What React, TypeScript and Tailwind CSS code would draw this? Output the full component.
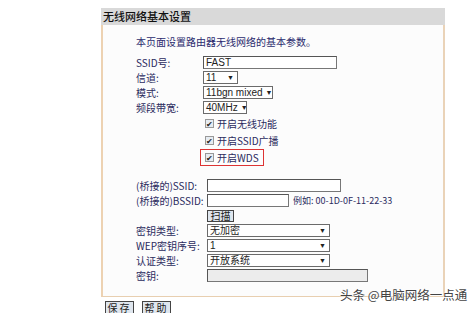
import React from "react";

const font = { fontFamily: '"Noto Sans CJK SC", "Liberation Sans", sans-serif' };

function Sel({ w, text }: { w: number; text: string }) {
  return (
    <div
      className="h-[13px] border border-[#6b6b6b] bg-white flex items-center justify-between pl-[2px] pr-[3px] text-[10px] text-[#222] leading-none whitespace-nowrap overflow-hidden"
      style={{ width: w, fontFamily: '"Liberation Sans", "Noto Sans CJK SC", sans-serif' }}
    >
      <span>{text}</span>
      <span className="text-[7px] ml-[3px]">▼</span>
    </div>
  );
}

function Inp({ w, text, gray }: { w: number; text?: string; gray?: boolean }) {
  return (
    <div
      className={`h-[13px] border border-[#777] border-t-[#555] border-l-[#555] flex items-center pl-[2px] text-[10px] text-[#222] leading-none ${gray ? "bg-[#ececec]" : "bg-white"}`}
      style={{ width: w, fontFamily: '"Liberation Sans", "Noto Sans CJK SC", sans-serif' }}
    >
      {text}
    </div>
  );
}

function Row({ label, h = 15, ml = 67, children }: { label: string; h?: number; ml?: number; children?: React.ReactNode }) {
  return (
    <div className="flex items-center" style={{ height: h }}>
      <div className="text-[10px] text-[#2b2b5e] leading-none whitespace-nowrap" style={{ width: ml }}>
        {label}
      </div>
      {children}
    </div>
  );
}

function Check({ text, boxed }: { text: string; boxed?: boolean }) {
  return (
    <div className="flex items-center h-[17px]">
      <div
        className={`flex items-center gap-[3px] h-[17px] pl-[4px] pr-[4px] -ml-[5px] ${boxed ? "border border-[#d33] bg-[#fdfdfd]" : "border border-transparent"}`}
      >
        <div className="w-[9px] h-[9px] border border-[#999] bg-[#e6ecf2] flex items-center justify-center text-[8px] leading-none text-[#222]">
          ✔
        </div>
        <span className="text-[10px] text-[#2b2b5e] leading-none">{text}</span>
      </div>
    </div>
  );
}

export default function App() {
  return (
    <div className="relative w-[471px] h-[313px] bg-white overflow-hidden" style={font}>
      <div className="pt-[8px] pl-[101px] w-[445px]">
        <div className="h-[17px] bg-[#d9d9d9] flex items-center pl-[2px] text-[11px] text-[#111] leading-none font-medium">
          无线网络基本设置
        </div>
        <div className="h-[272px] bg-[#fcfcfc] border-l-2 border-r-2 border-b border-l-[#edd2b2] border-r-[#ead3b8] border-b-[#e8cfb0] pl-[33px]">
          <div className="h-[30px] flex items-center pt-[4px] text-[10px] text-[#2b2b6e] leading-none">
            本页面设置路由器无线网络的基本参数。
          </div>
          <Row label="SSID号:">
            <Inp w={134} text="FAST" />
          </Row>
          <Row label="信道:">
            <Sel w={35} text="11" />
          </Row>
          <Row label="模式:">
            <Sel w={70} text="11bgn mixed" />
          </Row>
          <Row label="频段带宽:">
            <Sel w={44} text="40MHz" />
          </Row>
          <div className="pl-[69px]">
            <Check text="开启无线功能" />
            <Check text="开启SSID广播" />
            <Check text="开启WDS" boxed />
          </div>
          <div className="h-[12px]" />
          <Row label="(桥接的)SSID:" ml={71}>
            <Inp w={134} />
          </Row>
          <Row label="(桥接的)BSSID:" ml={71}>
            <Inp w={82} />
            <span className="ml-[4px] text-[9px] text-[#2b2b5e] leading-none whitespace-nowrap">例如: 00-1D-0F-11-22-33</span>
          </Row>
          <Row label="" ml={71} h={15}>
            <div className="h-[12px] w-[27px] border border-[#444] bg-[#dfe6ee] text-[10px] leading-none flex items-center justify-center text-[#222]">
              扫描
            </div>
          </Row>
          <Row label="密钥类型:" ml={71}>
            <Sel w={123} text="无加密" />
          </Row>
          <Row label="WEP密钥序号:" ml={71}>
            <Sel w={123} text="1" />
          </Row>
          <Row label="认证类型:" ml={71}>
            <Sel w={123} text="开放系统" />
          </Row>
          <Row label="密钥:" ml={71}>
            <Inp w={161} gray />
          </Row>
        </div>
        <div className="flex gap-[8px] pt-[4px] pl-[4px]">
          <div className="h-[13px] w-[29px] border border-[#444] bg-[#dfe6ee] text-[10px] leading-none flex items-center justify-center text-[#222] tracking-[2px]">
            保存
          </div>
          <div className="h-[13px] w-[29px] border border-[#444] bg-[#dfe6ee] text-[10px] leading-none flex items-center justify-center text-[#222] tracking-[2px]">
            帮助
          </div>
        </div>
      </div>
      <div
        className="absolute left-[340px] top-[289px] text-[12.5px] leading-none text-[#444] whitespace-nowrap"
        style={{ textShadow: "0 0 2px #fff, 0 0 2px #fff" }}
      >
        头条 @电脑网络一点通
      </div>
    </div>
  );
}
